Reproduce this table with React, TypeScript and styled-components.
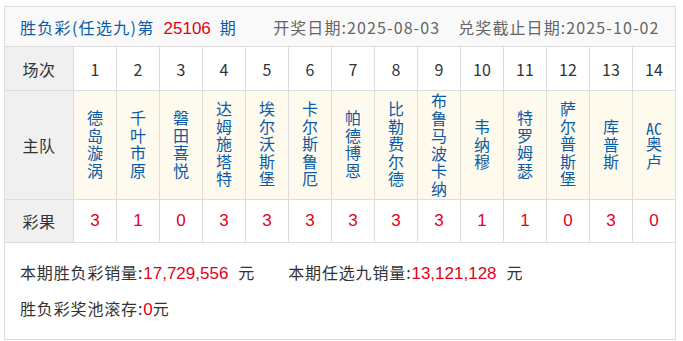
import React from 'react'
import styled, { createGlobalStyle } from 'styled-components'

const GlobalStyle = createGlobalStyle`
  body {
    margin: 0;
    background: #fff;
    font-family: "Noto Sans CJK SC", "DejaVu Sans", sans-serif;
  }
`;

const Wrap = styled.div`
  width: 672px;
  margin: 6px 0 0 4px;
  border: 1px solid #dddddd;
  box-sizing: border-box;
  color: #333;
`;

const Header = styled.div`
  display: flex;
  align-items: center;
  height: 39px;
  padding-left: 15px;
  background: #f9f9f9;
  border-bottom: 1px solid #dddddd;
  font-size: 16px;
  letter-spacing: 1.3px;
`;

const Title = styled.div`
  color: #0b5ca8;
  white-space: nowrap;
`;

const DateText = styled.div<{ $gap: number }>`
  color: #666;
  margin-left: ${p => p.$gap}px;
  letter-spacing: 1.1px;
  white-space: nowrap;
`;

const Red = styled.span<{ $size?: number; $mx?: number }>`
  color: #e2001a;
  font-family: "Liberation Sans", Arial, sans-serif;
  font-size: ${p => p.$size ?? 17}px;
  letter-spacing: 0;
  margin: 0 ${p => p.$mx ?? 0}px;
`;

const Row = styled.div<{ $h: number; $bg?: string }>`
  display: grid;
  grid-template-columns: 69px repeat(13, 43px) 42px;
  height: ${p => p.$h}px;
  background: ${p => p.$bg ?? '#fff'};
  border-bottom: 1px solid #dddddd;
  box-sizing: border-box;
`;

const Label = styled.div`
  display: flex;
  align-items: center;
  justify-content: center;
  background: #f0f0f0;
  border-right: 1px solid #dddddd;
  font-size: 16px;
  letter-spacing: 0.5px;
  color: #333;
`;

const Cell = styled.div<{ $kind?: 'num' | 'result' }>`
  display: flex;
  align-items: center;
  justify-content: center;
  border-right: 1px solid #dddddd;
  &:last-child { border-right: none; }
  font-size: ${p => (p.$kind === 'result' ? 17 : 16)}px;
  color: ${p => (p.$kind === 'result' ? '#e2001a' : '#333')};
  font-family: ${p =>
    p.$kind === 'result'
      ? '"Liberation Sans", Arial, sans-serif'
      : '"Noto Sans CJK SC", sans-serif'};
`;

const TeamCell = styled.div`
  display: flex;
  align-items: center;
  justify-content: center;
  border-right: 1px solid #dddddd;
  &:last-child { border-right: none; }
`;

const TeamName = styled.span`
  writing-mode: vertical-rl;
  text-orientation: upright;
  font-size: 16px;
  line-height: 16px;
  letter-spacing: 1.5px;
  color: #0b5ca8;
`;

const Latin = styled.span`
  text-combine-upright: all;
`;

const Summary = styled.div`
  padding: 12px 0 0 15px;
  height: 96px;
  box-sizing: border-box;
  font-size: 16px;
  line-height: 34px;
  letter-spacing: 0.85px;
  color: #333;
`;

const Line = styled.div`
  display: flex;
  align-items: baseline;
  white-space: nowrap;
`;

const Item = styled.span<{ $gap?: number }>`
  margin-left: ${p => p.$gap ?? 0}px;
`;

const Unit = styled.span<{ $gap?: number }>`
  margin-left: ${p => p.$gap ?? 0}px;
`;

const teams = ['德岛漩涡', '千叶市原', '磐田喜悦', '达姆施塔特', '埃尔沃斯堡', '卡尔斯鲁厄', '帕德博恩', '比勒费尔德', '布鲁马波卡纳', '韦纳穆', '特罗姆瑟', '萨尔普斯堡', '库普斯', 'AC奥卢'];
const results = ['3', '1', '0', '3', '3', '3', '3', '3', '3', '1', '1', '0', '3', '0'];

function App() {
  return (
    <>
      <GlobalStyle />
      <Wrap>
        <Header>
          <Title>
            胜负彩(任选九)第<Red $mx={9}>25106</Red>期
          </Title>
          <DateText $gap={36}>开奖日期:2025-08-03</DateText>
          <DateText $gap={18}>兑奖截止日期:2025-10-02</DateText>
        </Header>

        <Row $h={44}>
          <Label>场次</Label>
          {teams.map((_, i) => (
            <Cell key={i} $kind="num">{i + 1}</Cell>
          ))}
        </Row>

        <Row $h={109} $bg="#fefaee">
          <Label>主队</Label>
          {teams.map((name, i) => (
            <TeamCell key={i}>
              <TeamName>
                {(name.match(/[A-Za-z]+|./g) ?? []).map((ch, j) =>
                  /[A-Za-z]/.test(ch) ? <Latin key={j}>{ch}</Latin> : ch
                )}
              </TeamName>
            </TeamCell>
          ))}
        </Row>

        <Row $h={43}>
          <Label>彩果</Label>
          {results.map((r, i) => (
            <Cell key={i} $kind="result">{r}</Cell>
          ))}
        </Row>

        <Summary>
          <Line>
            <Item>本期胜负彩销量:<Red>17,729,556</Red><Unit $gap={10}>元</Unit></Item>
            <Item $gap={33}>本期任选九销量:<Red>13,121,128</Red><Unit $gap={10}>元</Unit></Item>
          </Line>
          <Line>
            <Item>胜负彩奖池滚存:<Red>0</Red>元</Item>
          </Line>
        </Summary>
      </Wrap>
    </>
  );
}

export default App;
